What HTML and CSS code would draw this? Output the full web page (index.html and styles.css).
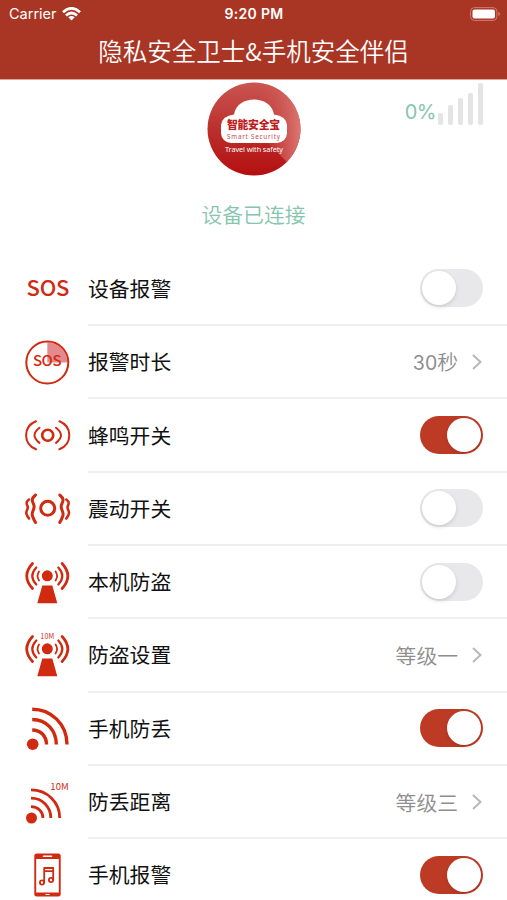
FILE: index.html
```html
<!doctype html>
<html lang="zh-CN">
<head>
<meta charset="utf-8">
<title>隐私安全卫士</title>
<link rel="stylesheet" href="styles.css">
</head>
<body>
<header>
	<div class="status">
		<div class="carrier">Carrier
			<svg width="19" height="14" viewBox="0 0 19 14" fill="none" stroke="#fff" stroke-width="2.7">
				<path d="M1 5.2Q9.500-2.600 18 5.200M4 8.500Q9.500 3.500 15 8.500"/>
				<path d="M9.500 13.500L6.300 10.300Q9.500 7.700 12.700 10.300Z" fill="#fff" stroke="none"/>
			</svg>
		</div>
		<div class="time">9:20 PM</div>
		<svg class="battery" width="31" height="14" viewBox="0 0 31 14">
			<rect x=".6" y=".6" width="26.300" height="12.800" rx="3.800" fill="none" stroke="#d07c6e"/>
			<rect x="2.500" y="2.500" width="22.500" height="9" rx="2" fill="#fff"/>
			<path d="M28.300 4.800Q31.800 7 28.300 9.200Z" fill="#d07c6e"/>
		</svg>
	</div>
	<h1>隐私安全卫士&amp;手机安全伴侣</h1>
</header>
<section class="device">
	<svg class="logo" width="94" height="94" viewBox="0 0 94 94">
		<defs>
			<linearGradient id="base" x1="0" y1="0" x2="0" y2="1">
				<stop offset="0" stop-color="#c95552"/>
				<stop offset=".5" stop-color="#bb302d"/>
				<stop offset="1" stop-color="#b50f10"/>
			</linearGradient>
			<linearGradient id="sweep" x1="0" y1="0" x2="1" y2="0">
				<stop offset="0" stop-color="#c94b49" stop-opacity="0"/>
				<stop offset="1" stop-color="#dc7773"/>
			</linearGradient>
		</defs>
		<circle cx="47" cy="47" r="46.500" fill="url(#base)"/>
		<path d="M47 47V.5A46.500 46.500 0 0 1 79.900 79.900Z" fill="url(#sweep)"/>
		<path d="M24 61a10 10 0 0 1-10-10V43Q15 34 27 32.500C30 12.500 64 12.500 67 32.500Q79 34 80 43v8a10 10 0 0 1-10 10Z" fill="#fff"/>
		<text x="20" y="47.300" class="logo-name" textLength="53">智能安全宝</text>
		<text x="20" y="56.500" class="logo-en" textLength="53">Smart Security</text>
		<text x="18" y="69.500" class="logo-tag" textLength="58">Travel with safety</text>
	</svg>
	<p class="state">设备已连接</p>
	<div class="signal">
		<span>0%</span>
		<i class="s1"></i><i class="s2"></i><i class="s3"></i><i class="s4"></i><i class="s5"></i>
	</div>
</section>
<ul class="settings">
	<li>
		<svg class="icon" viewBox="0 0 48 48"><text x="3.500" y="31" font-size="22" font-weight="500" textLength="43">SOS</text></svg>
		<div class="row"><span>设备报警</span><div class="switch"></div></div>
	</li>
	<li>
		<svg class="icon" viewBox="0 0 48 48">
			<path d="M24.300 23.500V3.500A20 20 0 0 1 44.300 23.500Z" fill="#e58a8c"/>
			<circle class="line" cx="24.300" cy="23.500" r="21" stroke-width="2"/>
			<text x="10" y="27" font-size="15" font-weight="500" textLength="28.500">SOS</text>
		</svg>
		<div class="row"><span>报警时长</span><div class="value"><span><b>30</b>秒</span><svg class="arrow" viewBox="0 0 10 16"><path d="M1 1L8.500 8L1 15"/></svg></div></div>
	</li>
	<li>
		<svg class="icon" viewBox="0 0 48 48">
			<g class="line" stroke-width="2">
				<circle cx="24.700" cy="23.300" r="5.500" stroke-width="2.600"/>
				<path d="M16.500 15.700Q6.500 23.300 16.500 30.900M33 15.700Q43 23.300 33 30.900"/>
				<path d="M13 9.300C-.2 14.500-.2 32 13 37.300M36.400 9.300C49.600 14.500 49.600 32 36.400 37.300"/>
			</g>
		</svg>
		<div class="row"><span>蜂鸣开关</span><div class="switch on"></div></div>
	</li>
	<li>
		<svg class="icon" viewBox="0 0 48 48">
			<g class="line" stroke-width="3">
				<circle cx="24.700" cy="23.300" r="7"/>
				<path d="M12.500 10C7 14.500 10 17 11 20.500C12 25 7.500 27 9.700 31.500Q10.500 34 12.500 37.500"/>
				<path d="M36.800 10C42.300 14.500 39.300 17 38.300 20.500C37.300 25 41.800 27 39.600 31.500Q38.800 34 36.800 37.500"/>
				<path stroke-width="2.600" d="M6 14.500C1.500 17.500 4.500 20 4.800 22C5 25 2.500 26 3.500 29Q4 31 6 33.500"/>
				<path stroke-width="2.600" d="M43.300 14.500C47.800 17.500 44.800 20 44.500 22C44.300 25 46.800 26 45.800 29Q45.300 31 43.300 33.500"/>
			</g>
		</svg>
		<div class="row"><span>震动开关</span><div class="switch"></div></div>
	</li>
	<li>
		<svg class="icon" viewBox="0 0 48 48">
			<g id="tower">
				<circle cx="24.300" cy="16.800" r="5.500"/>
				<path d="M19.300 26.500H29.300L34.300 44.300H14.300Z"/>
				<path class="line" stroke-width="1.800" d="M16 12.500Q13 17 16 21.500M32.600 12.500Q35.600 17 32.600 21.500"/>
				<path class="line" stroke-width="2.200" d="M13.300 8.500Q5.300 17 13.300 25.500M35.300 8.500Q43.300 17 35.300 25.500"/>
				<path class="line" stroke-width="2.700" d="M9.500 4.500Q-2 17 9.500 29.500M39.100 4.500Q50.600 17 39.100 29.500"/>
			</g>
		</svg>
		<div class="row"><span>本机防盗</span><div class="switch"></div></div>
	</li>
	<li>
		<svg class="icon" viewBox="0 0 48 48">
			<use href="#tower"/>
			<text x="17.300" y="7" font-size="7" textLength="14">10M</text>
		</svg>
		<div class="row"><span>防盗设置</span><div class="value">等级一<svg class="arrow" viewBox="0 0 10 16"><path d="M1 1L8.500 8L1 15"/></svg></div></div>
	</li>
	<li>
		<svg class="icon" viewBox="0 0 48 48">
			<circle cx="9.700" cy="39.200" r="5.800"/>
			<path class="butt" stroke-width="3.400" d="M9.200 4.200C28 4.200 44 19 44 39.500M9.200 14.500C24 14.500 33.300 26 33.300 39.500M9.200 25C17.500 25 23.500 31 23.500 39.500"/>
		</svg>
		<div class="row"><span>手机防丢</span><div class="switch on"></div></div>
	</li>
	<li>
		<svg class="icon" viewBox="0 0 48 48">
			<circle cx="8.500" cy="39" r="5.500"/>
			<path class="butt" stroke-width="2.800" d="M8 10.900C24 10.900 36.700 23 36.700 39M8 19.200C19.500 19.200 27.800 28 27.800 39M8 27.700C15 27.700 20 32.500 20 39"/>
			<text x="27.300" y="11" font-size="9.500" textLength="18.500">10M</text>
		</svg>
		<div class="row"><span>防丢距离</span><div class="value">等级三<svg class="arrow" viewBox="0 0 10 16"><path d="M1 1L8.500 8L1 15"/></svg></div></div>
	</li>
	<li>
		<svg class="icon" viewBox="0 0 48 48">
			<rect x="11.300" y="1.500" width="26.400" height="43" rx="2.500"/>
			<rect x="13.200" y="7" width="22.600" height="33.500" fill="#fff"/>
			<path d="M20.500 4.300H28.500" stroke="#fff" stroke-width="1.600" stroke-linecap="round"/>
			<path d="M22.500 42.500H26.500" stroke="#fff" stroke-width="1"/>
			<g class="line" stroke-width="1.800">
				<circle cx="19" cy="30.500" r="2.100"/>
				<circle cx="28" cy="28" r="2.100"/>
				<path d="M21.200 30.500V16H30.200V28M21.200 19.200H30.200"/>
			</g>
		</svg>
		<div class="row"><span>手机报警</span><div class="switch on"></div></div>
	</li>
</ul>
</body>
</html>
```
FILE: styles.css
```css
* {
	box-sizing: border-box;
	margin: 0;
	padding: 0;
}

body {
	background: #fff;
	font-family: "Noto Sans CJK SC", sans-serif;
	height: 900px;
	overflow: hidden;
}

header {
	background: #a93624;
	border-bottom: 1px solid #e0a49b;
	color: #fff;
	height: 80px;
}

.status {
	align-items: center;
	display: grid;
	font-family: Inter, sans-serif;
	font-size: 14.5px;
	grid-template-columns: 1fr auto 1fr;
	height: 27px;
	padding: 0 6px 0 9px;
}

.carrier {
	align-items: center;
	display: flex;
	gap: 5px;
}

.time {
	font-size: 14px;
	font-weight: 600;
	letter-spacing: .3px;
	margin-left: -2px;
}

.battery {
	justify-self: end;
}

h1 {
	font-size: 24.5px;
	font-weight: 350;
	line-height: 48px;
	text-align: center;
	white-space: nowrap;
}

.device {
	align-items: center;
	display: flex;
	flex-direction: column;
	height: 172.8px;
	padding-top: 2px;
	position: relative;
}

.logo-name {
	fill: #c01e1e;
	font-size: 10.8px;
	font-weight: 900;
}

.logo-en {
	fill: #c84845;
	font-family: "Noto Sans", sans-serif;
	font-size: 6.3px;
}

.logo-tag {
	fill: #fff;
	font-family: "Noto Sans", sans-serif;
	font-size: 7.3px;
}

.state {
	color: #86c5ae;
	font-size: 20.8px;
	font-weight: 350;
	line-height: 30px;
	margin-top: 23px;
}

/* signal strength sits over the top right corner */
.signal {
	align-items: flex-end;
	color: #86c5ae;
	display: flex;
	font-family: Inter, sans-serif;
	font-size: 20px;
	gap: 5px;
	height: 42px;
	letter-spacing: -.5px;
	position: absolute;
	right: 24px;
	top: 3px;
}

.signal span {
	line-height: 26px;
	margin-right: -3px;
}

.signal i {
	background: #e4e4e4;
	border-radius: 2px;
	width: 5px;
}

.s1 { height: 12px; }
.s2 { height: 20px; }
.s3 { height: 27px; }
.s4 { height: 32px; }
.s5 { height: 42px; }

.settings {
	list-style: none;
}

li {
	display: flex;
	gap: 17px;
	height: 73.3px;
	padding-left: 23px;
}

.icon {
	align-self: center;
	fill: #d02a10;
	flex: none;
	font-family: "Noto Sans CJK SC", sans-serif;
	height: 48px;
	width: 48px;
}

.line {
	fill: none;
	stroke: #d02a10;
	stroke-linecap: round;
	stroke-linejoin: round;
}

.butt {
	fill: none;
	stroke: #d02a10;
}

.row {
	align-items: center;
	border-bottom: 2px solid #efefef;
	color: #111;
	display: flex;
	flex: 1;
	font-size: 20.8px;
	justify-content: space-between;
	line-height: 30px;
	padding-right: 24px;
}

.row > span {
	padding-bottom: 1px;
}

.switch {
	background: #e8e8ea;
	border-radius: 19px;
	height: 38px;
	padding: 2px;
	width: 63px;
}

.switch::before {
	background: #fff;
	border-radius: 50%;
	box-shadow: 0 2px 4px rgba(0,0,0,.12);
	content: "";
	display: block;
	height: 34px;
	width: 34px;
}

.switch.on {
	background: #bd3b24;
}

.switch.on::before {
	margin-left: 25px;
}

.value {
	align-items: center;
	color: #8e8e8e;
	display: flex;
	font-weight: 350;
	gap: 14px;
	padding-right: 1px;
}

.value b {
	font-family: Inter, sans-serif;
	font-size: 19.5px;
	font-weight: 400;
}

.arrow {
	fill: none;
	height: 16px;
	stroke: #b8b8b8;
	stroke-width: 2;
	width: 10px;
}
```
